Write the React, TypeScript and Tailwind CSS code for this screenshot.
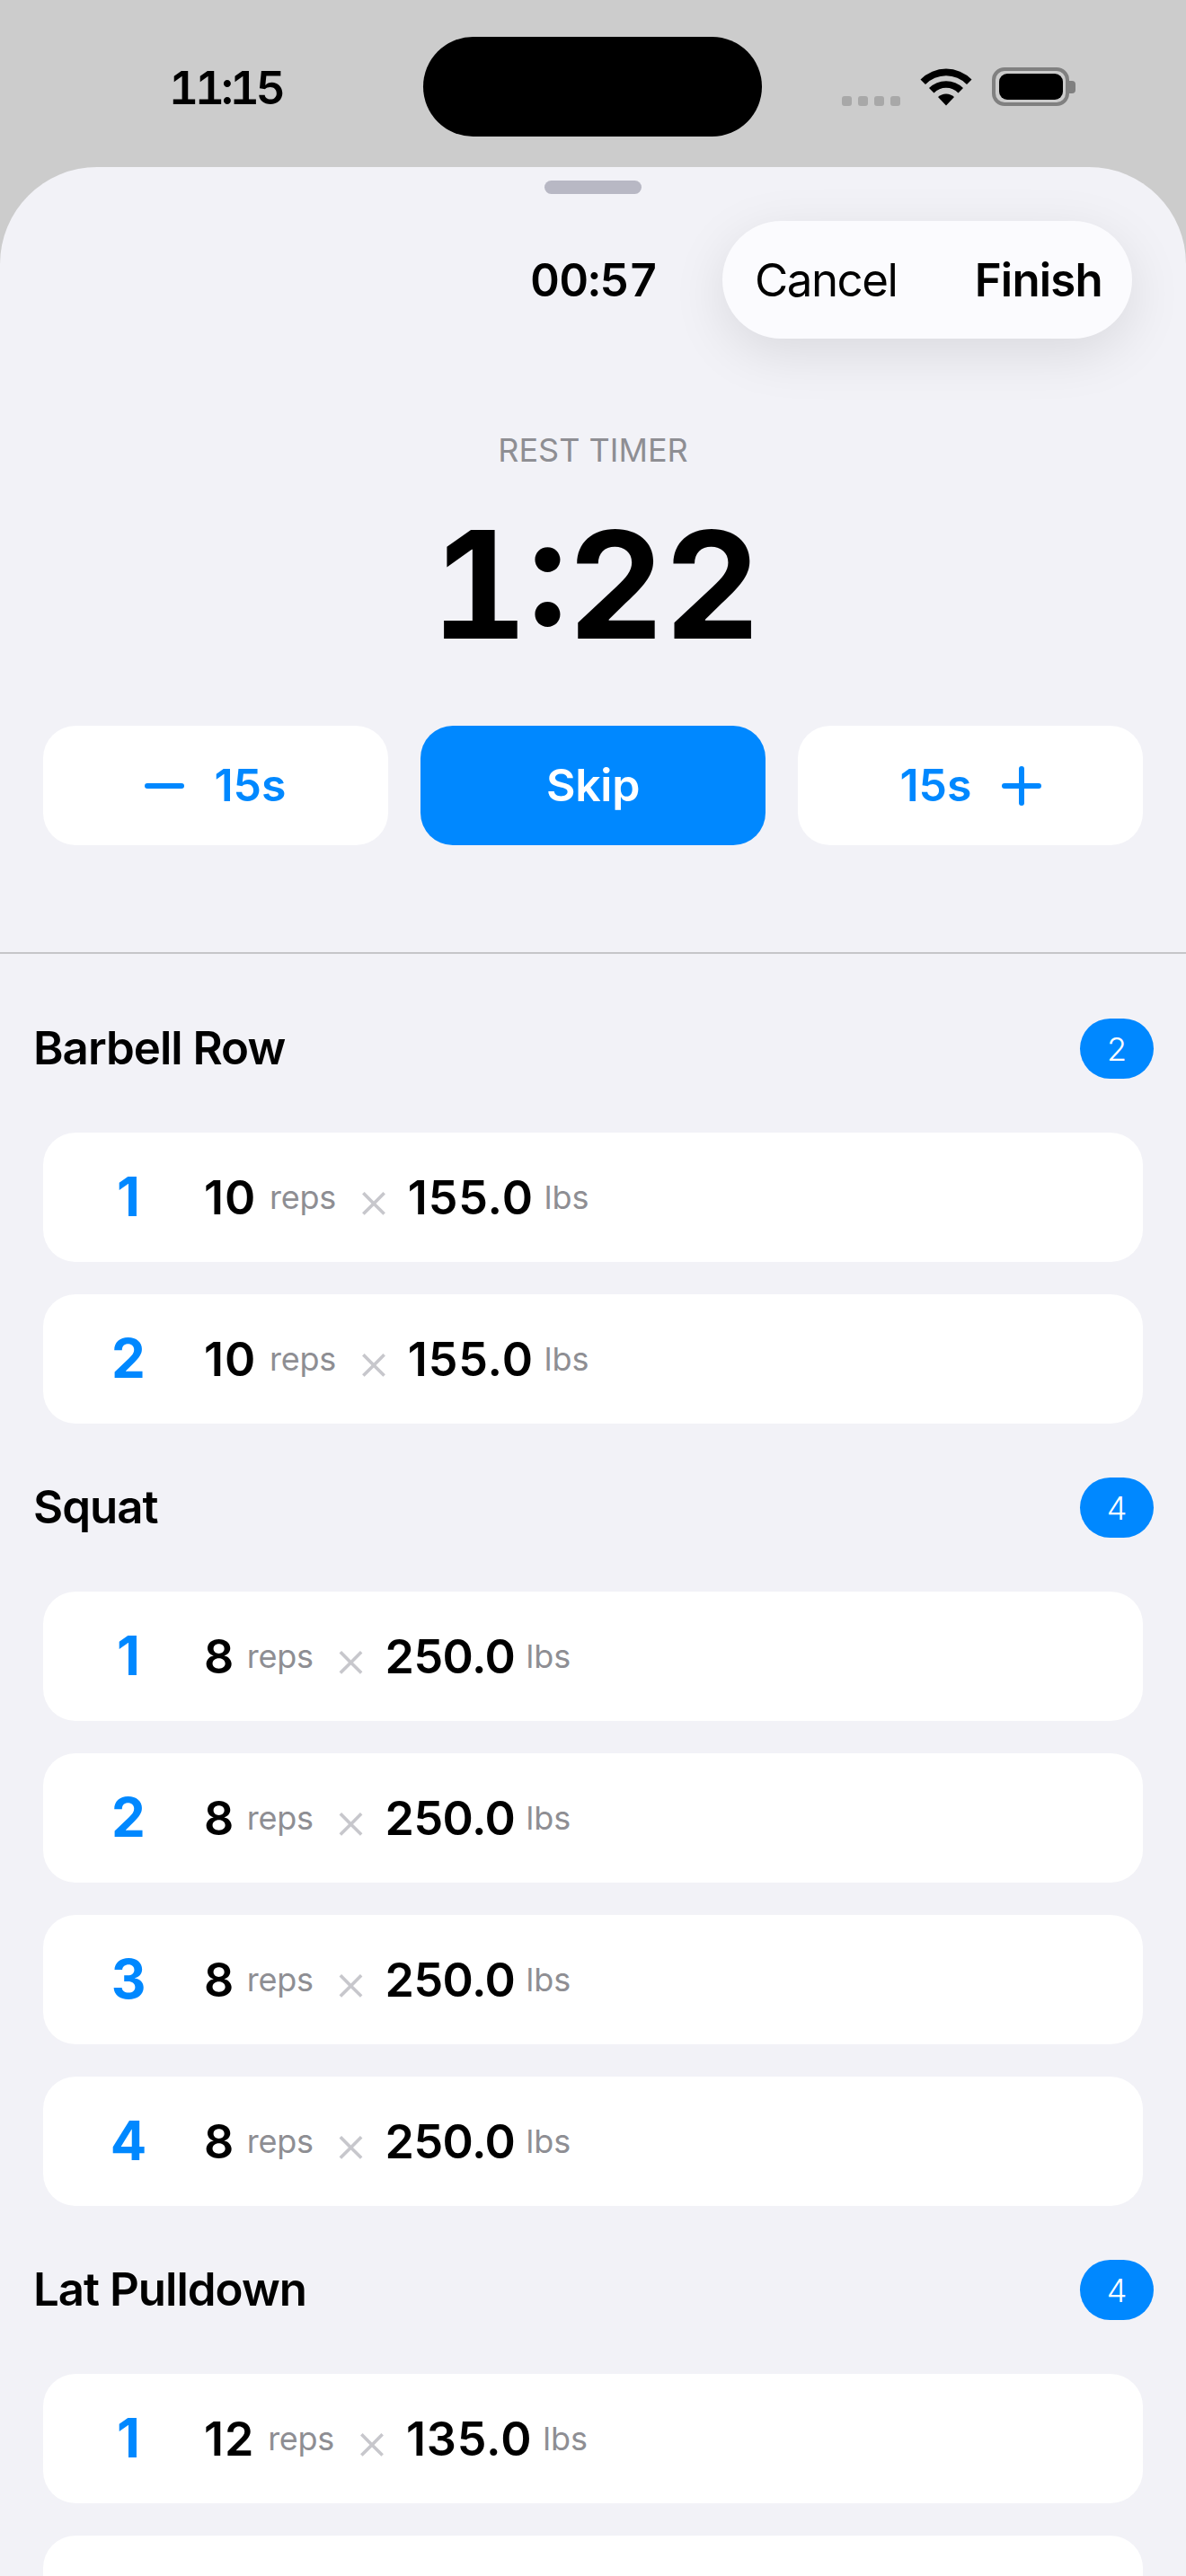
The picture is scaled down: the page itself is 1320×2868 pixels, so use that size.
import React from "react";

const font = { fontFamily: "Inter, 'Liberation Sans', sans-serif" };

function StatusBar() {
  return (
    <div className="flex h-[186px] items-start bg-[#cccccc]">
      <div className="ml-[188px] mt-[67px] w-[283px] text-[51px] font-semibold leading-[62px] tabular-nums tracking-[-4px] text-black">11:15</div>
      <div className="mt-[41px] h-[111px] w-[377px] rounded-full bg-black" />
      <div className="ml-[89px] mt-[75px] flex h-[43px] items-end">
        <div className="flex gap-[7px]">
          {[0, 1, 2, 3].map((i) => (
            <div key={i} className="h-[11px] w-[11px] rounded-[3px] bg-[#a8a8a8]" />
          ))}
        </div>
        <svg width="58" height="43" viewBox="0 0 58 43" className="ml-[22px]">
          <path d="M0.5 13.5 A40 40 0 0 1 57.5 13.5 L52 19 A32 32 0 0 0 6 19 Z" fill="#000" />
          <path d="M10 23 A27 27 0 0 1 48 23 L42.5 28.5 A19 19 0 0 0 15.5 28.5 Z" fill="#000" />
          <path d="M20 33 A13 13 0 0 1 38 33 L29 42.5 Z" fill="#000" />
        </svg>
        <div className="ml-[22px] flex items-center self-stretch">
          <div className="flex h-[43px] w-[86px] items-center justify-center rounded-[14px] border-[4px] border-[#808080]">
            <div className="h-[29px] w-[71px] rounded-[9px] bg-black" />
          </div>
          <div className="h-[14px] w-[7px] rounded-r-[4px] bg-[#808080]" />
        </div>
      </div>
    </div>
  );
}

function StepButton({ sign, side }: { sign: "minus" | "plus"; side: "left" | "right" }) {
  const icon = (
    <svg width="44" height="44" viewBox="0 0 44 44" className="shrink-0">
      <line x1="3" y1="22" x2="41" y2="22" stroke="#0088ff" strokeWidth="6" strokeLinecap="round" />
      {sign === "plus" && <line x1="22" y1="3" x2="22" y2="41" stroke="#0088ff" strokeWidth="6" strokeLinecap="round" />}
    </svg>
  );
  return (
    <div className="flex h-[133px] w-[384px] items-center justify-center gap-[33px] rounded-[36px] bg-white text-[50px] font-semibold tracking-[0px] text-[#0088ff]">
      {side === "left" && icon}
      <span>15s</span>
      {side === "right" && icon}
    </div>
  );
}

function SetRow({ n, reps, weight, wide }: { n: number; reps: number; weight: string; wide: boolean }) {
  const track = wide ? "tracking-[0.9px]" : "tracking-[-0.5px]";
  return (
    <div className="flex h-[144px] items-center rounded-[36px] bg-white">
      <div className="ml-[48px] w-[94px] pb-[2px] text-center text-[60px] font-bold text-[#0088ff]">{n}</div>
      <div className="ml-[37px] flex items-center">
        <span className={`pt-[2px] text-[52px] font-semibold text-black ${track}`}>{reps}</span>
        <span className="ml-[15px] text-[36px] font-normal tracking-[-0.3px] text-[#8e8e93]">reps</span>
        <span className="ml-[23px] mt-[4px] text-[58px] font-light leading-none text-[#c7c7cc]">×</span>
        <span className={`ml-[19px] pt-[2px] text-[52px] font-semibold text-black ${track}`}>{weight}</span>
        <span className="ml-[12px] text-[36px] font-normal text-[#8e8e93]">lbs</span>
      </div>
    </div>
  );
}

function Section({ title, count, reps, weight, wide }: { title: string; count: number; reps: number; weight: string; wide: boolean }) {
  return (
    <section className="flex flex-col">
      <div className="flex h-[67px] items-center justify-between pl-[37px] pr-[36px]">
        <h2 className="text-[51px] font-semibold tracking-[-1px] text-black">{title}</h2>
        <div className="flex h-[67px] w-[82px] items-center justify-center rounded-full bg-[#0088ff] text-[36px] font-light text-white">{count}</div>
      </div>
      <div className="mx-[48px] mt-[60px] flex flex-col gap-[36px]">
        {Array.from({ length: count }, (_, i) => (
          <SetRow key={i} n={i + 1} reps={reps} weight={weight} wide={wide} />
        ))}
      </div>
    </section>
  );
}

export default function App() {
  return (
    <div style={font} className="h-[2868px] w-[1320px] overflow-hidden bg-[#cccccc]">
      <StatusBar />
      <div className="h-[2682px] overflow-hidden rounded-t-[108px] bg-[#f2f2f7]">
        <div className="mx-auto mt-[15px] h-[15px] w-[108px] rounded-full bg-[#b8b8c4]" />
        <div className="mt-[30px] grid h-[131px] grid-cols-[1fr_auto_1fr] items-center">
          <div />
          <div className="pl-[2px] pt-[2px] text-[51px] font-semibold tabular-nums tracking-[-0.7px] text-black">00:57</div>
          <div className="mr-[60px] flex h-[131px] w-[456px] items-center justify-between justify-self-end rounded-full bg-[#fbfbfe] pl-[36px] pr-[33px] pt-[2px] shadow-[0_16px_60px_rgba(0,0,0,0.10)]">
            <span className="text-[51px] font-normal tracking-[-1.5px] text-black">Cancel</span>
            <span className="text-[51px] font-semibold tracking-[-0.8px] text-black">Finish</span>
          </div>
        </div>
        <div className="mt-[102px] text-center text-[36px] font-normal leading-[44px] text-[#8e8e93]">REST TIMER</div>
        <div className="mt-[28px] pl-[6px] text-center text-[166px] font-bold leading-[200px] tabular-nums tracking-[0px] text-black">1:22</div>
        <div className="mt-[57px] flex justify-between px-[48px]">
          <StepButton sign="minus" side="left" />
          <div className="flex h-[133px] w-[384px] items-center justify-center rounded-[36px] bg-[#0088ff] text-[50px] font-semibold tracking-[-0.3px] text-white">Skip</div>
          <StepButton sign="plus" side="right" />
        </div>
        <div className="mt-[119px] h-[2px] bg-[#c6c6c8]" />
        <div className="mt-[72px] flex flex-col gap-[60px]">
          <Section title="Barbell Row" count={2} reps={10} weight="155.0" wide={true} />
          <Section title="Squat" count={4} reps={8} weight="250.0" wide={false} />
          <Section title="Lat Pulldown" count={4} reps={12} weight="135.0" wide={true} />
        </div>
      </div>
    </div>
  );
}
